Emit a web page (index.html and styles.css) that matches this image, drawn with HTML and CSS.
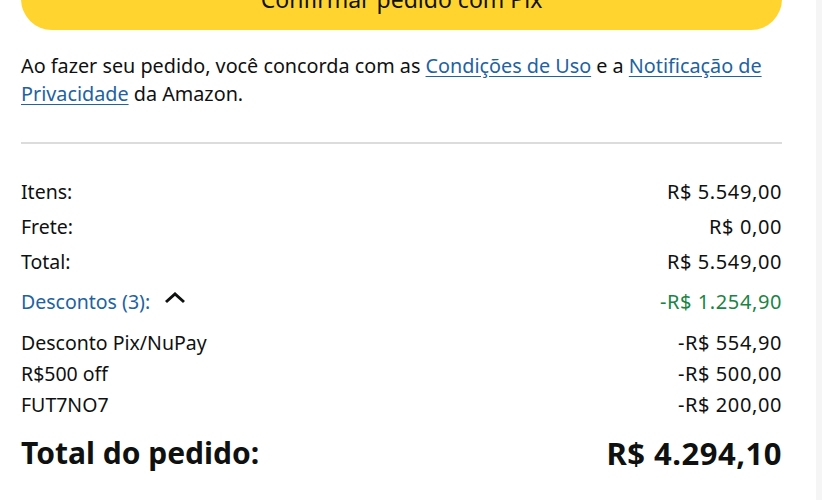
FILE: index.html
```html
<!DOCTYPE html>
<html lang="pt-BR">
<head>
    <meta charset="UTF-8">
    <title>Resumo do pedido</title>
    <link rel="stylesheet" href="styles.css">
</head>
<body>
    <div class="page">
        <div class="summary">
            <button type="button" class="confirm">Confirmar pedido com Pix</button>
            <p class="legal">Ao fazer seu pedido, você concorda com as <a href="#">Condições de Uso</a> e a <a href="#">Notificação de Privacidade</a> da Amazon.</p>
            <hr class="divider">
            <div class="row"><span>Itens:</span><span class="amount">R$ 5.549,00</span></div>
            <div class="row"><span>Frete:</span><span class="amount">R$ 0,00</span></div>
            <div class="row"><span>Total:</span><span class="amount">R$ 5.549,00</span></div>
            <div class="row discounts">
                <span class="toggle">Descontos (3):
                    <svg class="caret" width="22" height="12" viewBox="0 0 22 12"><path d="M2 10 L11 2 L20 10" fill="none" stroke="#0F1111" stroke-width="3"/></svg>
                </span>
                <span class="amount saving">-R$ 1.254,90</span>
            </div>
            <div class="row sub"><span>Desconto Pix/NuPay</span><span class="amount">-R$ 554,90</span></div>
            <div class="row sub"><span>R$500 off</span><span class="amount">-R$ 500,00</span></div>
            <div class="row sub"><span>FUT7NO7</span><span class="amount">-R$ 200,00</span></div>
            <div class="row grand"><span>Total do pedido:</span><span class="amount">R$ 4.294,10</span></div>
        </div>
        <div class="edge"></div>
    </div>
</body>
</html>
```

FILE: styles.css
```css
*{
    margin: 0;
    padding: 0;
    box-sizing: border-box;
}
html,body{
    width: 100%;
    height: 100%;
    background-color: #fff;
    font-family: "Noto Sans", "Open Sans", sans-serif;
    color: #0F1111;
}
.page{
    display: flex;
    height: 100%;
}
.summary{
    flex: 1;
    padding: 0 34px 0 21px;
}
.edge{
    width: 6px;
    background-color: #f5f5f5;
}
.confirm{
    display: block;
    width: 100%;
    height: 62px;
    margin-top: -32px;
    border: none;
    border-radius: 31px;
    background-color: #FFD42F;
    font-family: inherit;
    font-size: 23px;
    color: #0F1111;
    line-height: 46px;
}
.legal{
    margin-top: 22px;
    font-size: 19.8px;
    line-height: 28px;
}
.legal a{
    color: #2162A1;
    text-decoration: underline;
    text-underline-offset: 3px;
}
.divider{
    border: none;
    border-top: 2px solid #dcdcdc;
    margin-top: 34px;
    margin-bottom: 36px;
}
.row{
    display: flex;
    justify-content: space-between;
    align-items: center;
    font-size: 19.5px;
    line-height: 24px;
    margin-bottom: 11px;
}
.amount{
    font-size: 20px;
    letter-spacing: 0.6px;
}
.discounts{
    margin-top: 16px;
    margin-bottom: 17px;
}
.toggle{
    color: #2162A1;
    display: flex;
    align-items: center;
    gap: 14px;
}
.caret{
    margin-top: -8px;
}
.saving{
    color: #1A8445;
}
.sub{
    margin-bottom: 7px;
}
.grand{
    margin-top: 19px;
    font-size: 30px;
    font-weight: 700;
    line-height: 34px;
}
.grand .amount{
    font-size: 31px;
    letter-spacing: 0.5px;
}
```
